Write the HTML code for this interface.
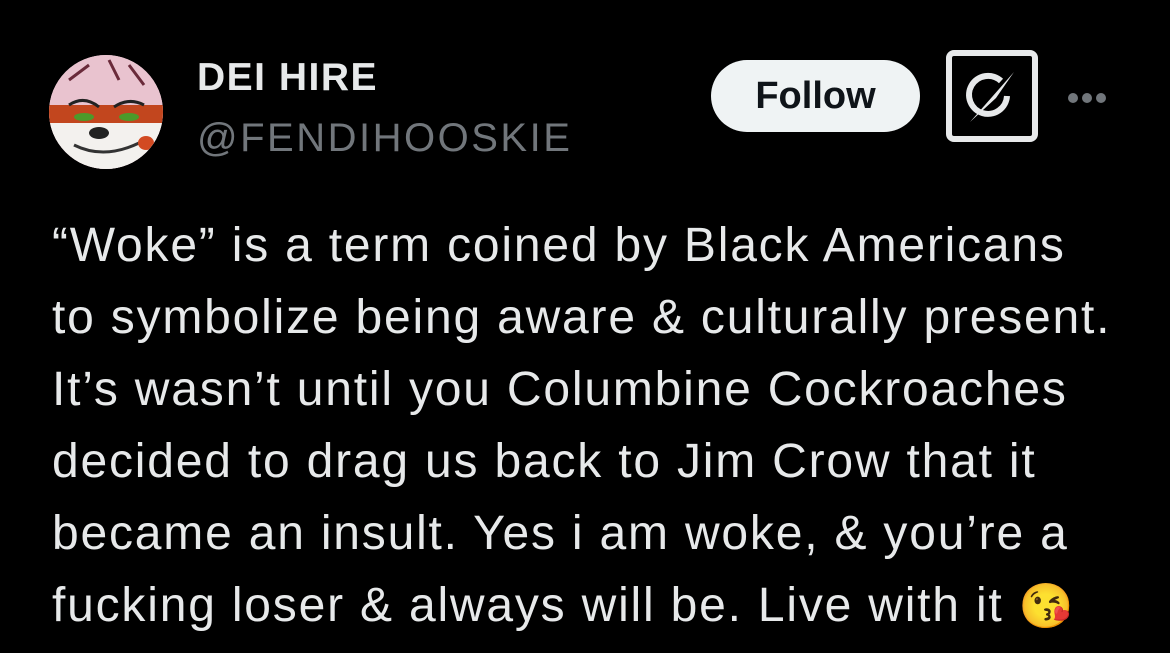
<!DOCTYPE html>
<html><head><style>
body{margin:0;width:1170px;height:653px;background:#000;overflow:hidden;font-family:"Liberation Sans",sans-serif;position:relative}
.av{position:absolute;left:49px;top:55px;width:114px;height:114px;border-radius:50%;overflow:hidden;background:#e9c3cf}
.name{position:absolute;left:197px;top:56px;font-size:39px;font-weight:bold;color:#e7e9ea;letter-spacing:1.5px}
.handle{position:absolute;left:197px;top:116px;font-size:40px;color:#71767b;letter-spacing:2.5px}
.follow{position:absolute;left:711px;top:60px;width:209px;height:72px;border-radius:36px;background:#eff3f4;color:#0f1419;font-weight:bold;font-size:38px;text-align:center;line-height:72px}
.grok{position:absolute;left:946px;top:50px;width:80px;height:80px;border:6px solid #e7e9ea;border-radius:8px}
.dots{position:absolute;left:1068px;top:90px}
.dots i{display:inline-block;width:10px;height:10px;border-radius:50%;background:#71767b;margin-right:4px}
.txt{position:absolute;left:52px;top:210px;font-size:48px;letter-spacing:1.8px;line-height:72px;color:#e7e9ea;white-space:nowrap}
</style></head><body>
<div class="av"><svg width="114" height="114" viewBox="0 0 114 114">
<rect width="114" height="114" fill="#e9c3cf"/>
<rect y="50" width="114" height="20" fill="#c2461e"/>
<rect y="68" width="114" height="46" fill="#f3f1ee"/>
<path d="M20 25 L40 10 M60 5 L70 25 M80 10 L95 30" stroke="#6a2a3a" stroke-width="3"/>
<ellipse cx="35" cy="62" rx="10" ry="4" fill="#4c9a2a"/><ellipse cx="80" cy="62" rx="10" ry="4" fill="#4c9a2a"/>
<path d="M20 50 Q35 40 50 52 M65 52 Q80 42 95 50" stroke="#222" stroke-width="3" fill="none"/>
<ellipse cx="50" cy="78" rx="10" ry="6" fill="#222"/>
<path d="M25 90 Q55 105 90 88" stroke="#333" stroke-width="3" fill="none"/>
<ellipse cx="97" cy="88" rx="8" ry="7" fill="#d24a22"/>
</svg></div>
<div class="name">DEI HIRE</div>
<div class="handle">@FENDIHOOSKIE</div>
<div class="follow">Follow</div>
<div class="grok"><svg width="80" height="80" viewBox="0 0 80 80">
<path d="M49 25 A19 19 0 1 0 55 40" stroke="#e7e9ea" stroke-width="6" fill="none"/>
<path d="M62 16 L18 66 L44 42 Z" fill="#e7e9ea"/>
</svg></div>
<div class="dots"><i></i><i></i><i></i></div>
<div class="txt">“Woke” is a term coined by Black Americans<br>to symbolize being aware &amp; culturally present.<br>It’s wasn’t until you Columbine Cockroaches<br>decided to drag us back to Jim Crow that it<br>became an insult. Yes i am woke, &amp; you’re a<br>fucking loser &amp; always will be. Live with it <span style="font-family:'Noto Color Emoji',sans-serif;font-size:44px;letter-spacing:0">😘</span></div>
</body></html>
